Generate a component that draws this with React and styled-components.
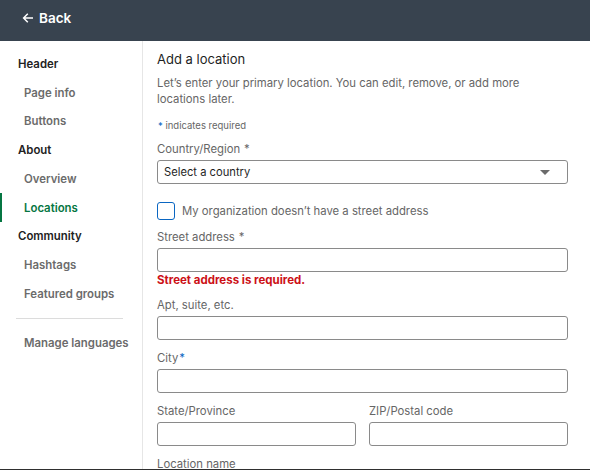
import React from "react";
import styled, { createGlobalStyle } from "styled-components";

const GlobalStyle = createGlobalStyle`
  * { box-sizing: border-box; }
  body {
    margin: 0;
    font-family: Inter, "Noto Sans", "Liberation Sans", sans-serif;
    background: #fff;
  }
`;

const Frame = styled.div`
  height: 470px;
  overflow: hidden;
  display: flex;
  flex-direction: column;
  border-bottom: 1px solid #2f2f2f;
`;

const TopBar = styled.header`
  height: 41px;
  flex: none;
  background: #38434f;
  display: flex;
  align-items: center;
  padding-left: 22px;
`;

const BackLink = styled.a`
  color: #fff;
  font-size: 13.5px;
  font-weight: 600;
  display: flex;
  align-items: center;
  gap: 5px;
  text-decoration: none;
  margin-top: -5px;
`;

const Body = styled.div`
  flex: 1;
  display: flex;
  min-height: 0;
`;

const Sidebar = styled.nav`
  width: 143px;
  flex: none;
  border-right: 1px solid #e6e6e6;
  padding-top: 8.5px;
`;

const NavItem = styled.div`
  position: relative;
  height: 28.75px;
  display: flex;
  align-items: center;
  padding-left: ${(p) => (p.$section ? "18px" : "24px")};
  font-size: 11.4px;
  font-weight: 600;
  color: ${(p) => (p.$section ? "#222" : p.$active ? "#057642" : "#6b6b6b")};

  &::before {
    content: "";
    display: ${(p) => (p.$active ? "block" : "none")};
    position: absolute;
    left: 0;
    top: 0;
    bottom: 0;
    width: 2px;
    background: #057642;
  }
`;

const NavDivider = styled.hr`
  border: none;
  border-top: 1px solid #dcdcdc;
  margin: 9.5px 19px 9.5px 16px;
`;

const Main = styled.main`
  flex: 1;
  padding: 8px 22px 0 14px;
`;

const Title = styled.h2`
  margin: 0;
  font-size: 13px;
  font-weight: 400;
  line-height: 20px;
  color: #1f1f1f;
`;

const Intro = styled.p`
  margin: 6px 0 0;
  font-size: 11.3px;
  line-height: 16px;
  color: #666;
`;

const RequiredNote = styled.p`
  margin: 12px 0 0;
  font-size: 9.5px;
  line-height: 14px;
  color: #666;
`;

const Star = styled.span`
  color: ${(p) => (p.$blue ? "#0a66c2" : "#666")};
  margin-left: ${(p) => (p.$tight ? "1px" : "4px")};
`;

const Field = styled.div`
  margin-top: ${(p) => p.$top || "0"};
  margin-bottom: ${(p) => p.$bottom || "10px"};
`;

const Label = styled.label`
  display: block;
  font-size: 11.3px;
  line-height: 16px;
  color: #666;
`;

const TextInput = styled.input`
  display: block;
  width: 100%;
  height: 24px;
  margin-top: 3px;
  border: 1px solid #8a8a8a;
  border-radius: 3px;
  background: #fff;
  font: inherit;
`;

const SelectBox = styled.div`
  margin-top: 3px;
  height: 24px;
  border: 1px solid #8a8a8a;
  border-radius: 3px;
  display: flex;
  align-items: center;
  justify-content: space-between;
  padding: 0 17px 0 6px;
  font-size: 11.2px;
  color: #1f1f1f;
`;

const Caret = styled.span`
  width: 0;
  height: 0;
  border-left: 5px solid transparent;
  border-right: 5px solid transparent;
  border-top: 5px solid #6b6b6b;
`;

const CheckRow = styled.label`
  display: flex;
  align-items: center;
  gap: 7px;
  height: 18px;
  margin: 18px 0 9px;
  font-size: 11.3px;
  color: #666;
`;

const CheckBox = styled.input`
  appearance: none;
  margin: 0;
  width: 18px;
  height: 18px;
  border: 1.5px solid #0a66c2;
  border-radius: 3px;
  background: #fff;
`;

const ErrorText = styled.div`
  font-size: 11.5px;
  line-height: 16px;
  font-weight: 700;
  color: #cc1016;
  margin: 0 0 9px;
`;

const Pair = styled.div`
  display: grid;
  grid-template-columns: 1fr 1fr;
  gap: 13px;
`;

const ArrowLeft = () => (
  <svg width="12" height="12" viewBox="0 0 12 12" fill="none">
    <path d="M11 6H1.8M5.8 1.8L1.6 6l4.2 4.2" stroke="#fff" strokeWidth="1.5" />
  </svg>
);

const navItems = [
  { label: "Header", section: true },
  { label: "Page info" },
  { label: "Buttons" },
  { label: "About", section: true },
  { label: "Overview" },
  { label: "Locations", active: true },
  { label: "Community", section: true },
  { label: "Hashtags" },
  { label: "Featured groups" },
];

export default function App() {
  return (
    <>
      <GlobalStyle />
      <Frame>
        <TopBar>
          <BackLink href="#">
            <ArrowLeft />
            Back
          </BackLink>
        </TopBar>
        <Body>
          <Sidebar>
            {navItems.map((item) => (
              <NavItem key={item.label} $section={item.section} $active={item.active}>
                {item.label}
              </NavItem>
            ))}
            <NavDivider />
            <NavItem>Manage languages</NavItem>
          </Sidebar>
          <Main>
            <Title>Add a location</Title>
            <Intro>
              Let’s enter your primary location. You can edit, remove, or add more
              locations later.
            </Intro>
            <RequiredNote>
              <Star $blue $tight>*</Star> indicates required
            </RequiredNote>

            <Field $top="8px" $bottom="0">
              <Label>
                Country/Region<Star>*</Star>
              </Label>
              <SelectBox>
                Select a country
                <Caret />
              </SelectBox>
            </Field>

            <CheckRow>
              <CheckBox type="checkbox" />
              My organization doesn’t have a street address
            </CheckRow>

            <Field $bottom="0">
              <Label>
                Street address<Star>*</Star>
              </Label>
              <TextInput />
            </Field>
            <ErrorText>Street address is required.</ErrorText>

            <Field>
              <Label>Apt, suite, etc.</Label>
              <TextInput />
            </Field>

            <Field>
              <Label>
                City<Star $blue $tight>*</Star>
              </Label>
              <TextInput />
            </Field>

            <Pair>
              <Field>
                <Label>State/Province</Label>
                <TextInput />
              </Field>
              <Field>
                <Label>ZIP/Postal code</Label>
                <TextInput />
              </Field>
            </Pair>

            <Field>
              <Label>Location name</Label>
              <TextInput />
            </Field>
          </Main>
        </Body>
      </Frame>
    </>
  );
}
